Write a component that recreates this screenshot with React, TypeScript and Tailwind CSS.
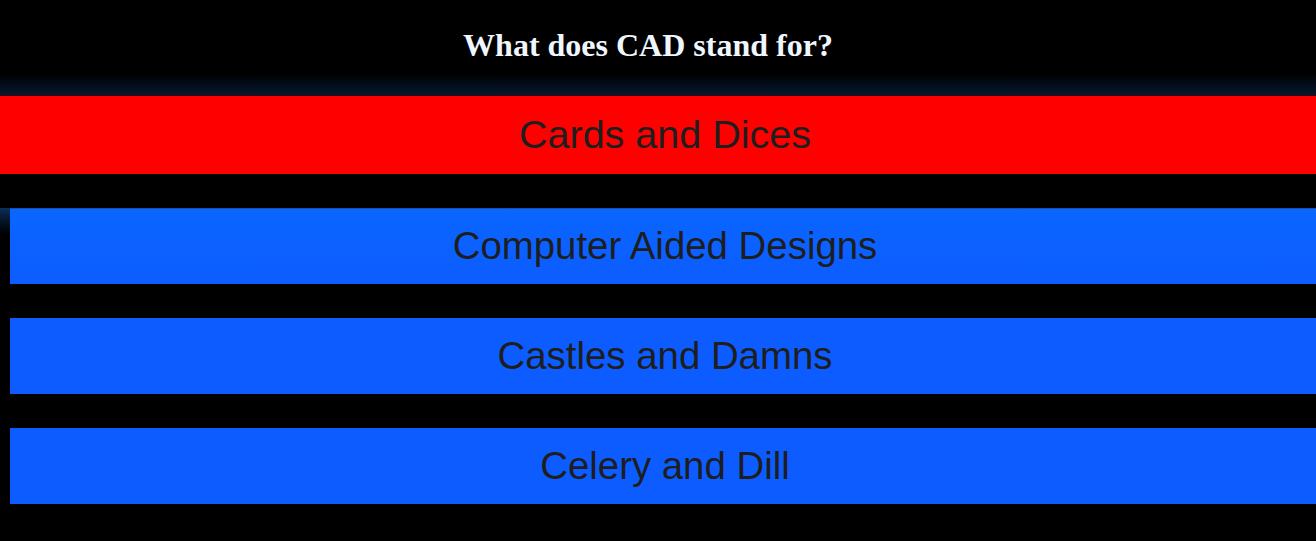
import React from "react";

const answers = ["Computer Aided Designs", "Castles and Damns", "Celery and Dill"];

export default function App() {
  return (
    <div className="w-[1316px] h-[541px] bg-black overflow-hidden">
      <div className="h-[95px] bg-[linear-gradient(to_bottom,#000_0px,#000_74px,#030e1d_86px,#061a30_95px)] flex justify-center">
        <h1
          className="mt-[27px] mr-[20px] text-[32px] leading-[37px] font-bold text-[#eef6ff]"
          style={{ fontFamily: '"Liberation Serif", "Times New Roman", serif' }}
        >
          What does CAD stand for?
        </h1>
      </div>
      <div className="border-t border-[#3a0508] h-[79px] bg-[#ff0000] flex items-center justify-center pl-[14px]">
        <span
          className="text-[39.5px] leading-none text-[#1e1e1e]"
          style={{ fontFamily: '"Liberation Sans", Arial, sans-serif' }}
        >
          Cards and Dices
        </span>
      </div>
      <div className="flex flex-col gap-[34px] mt-[34px]">
        {answers.map((a, i) => (
          <div key={a} className="flex">
            <div
              className={
                "w-[10px] h-[76px] " +
                (i === 0 ? "bg-[linear-gradient(to_bottom,#0b2f5c_0px,#061a33_10px,#000_26px)]" : "bg-black")
              }
            />
            <div
              className={
                "flex-1 h-[76px] flex items-center justify-center pl-[4px] border-t " +
                (i === 0
                  ? "bg-[linear-gradient(to_bottom,#0a66ff,#0d5cff)] border-[#1a4fa8]"
                  : "bg-[#0d5cff] border-[#0d5cff]")
              }
            >
              <span
                className="text-[38.4px] leading-none text-[#1e1e1e]"
                style={{ fontFamily: '"Liberation Sans", Arial, sans-serif' }}
              >
                {a}
              </span>
            </div>
          </div>
        ))}
      </div>
    </div>
  );
}
